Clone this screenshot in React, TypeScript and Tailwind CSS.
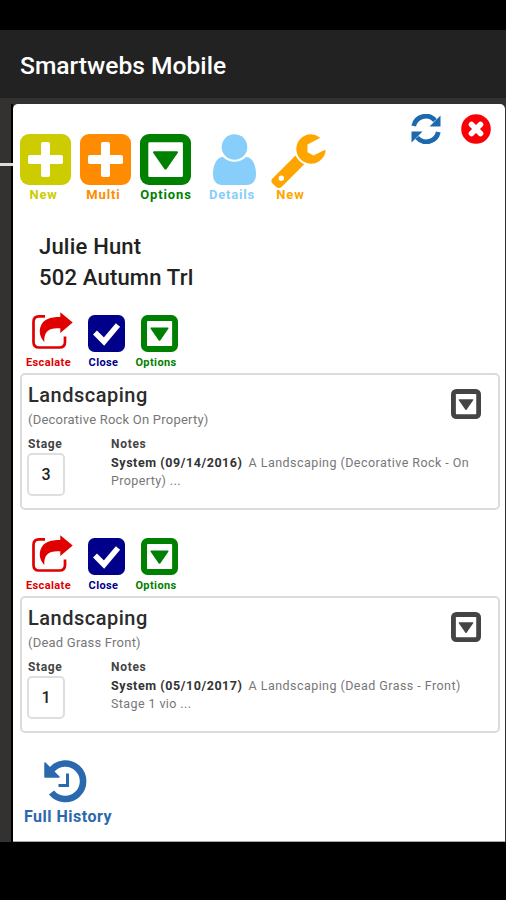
import type { ReactNode } from "react";

interface Violation {
  title: string;
  detail: string;
  stage: number;
  system: string;
  note: string;
  rest: string;
}

const violations: Violation[] = [
  {
    title: "Landscaping",
    detail: "(Decorative Rock On Property)",
    stage: 3,
    system: "System (09/14/2016)",
    note: "A Landscaping (Decorative Rock - On",
    rest: "Property) ...",
  },
  {
    title: "Landscaping",
    detail: "(Dead Grass Front)",
    stage: 1,
    system: "System (05/10/2017)",
    note: "A Landscaping (Dead Grass - Front)",
    rest: "Stage 1 vio ...",
  },
];

function PlusSquareIcon() {
  return (
    <svg viewBox="0 0 51 51" className="block h-[51px] w-[51px]" fill="currentColor">
      <rect width="51" height="51" rx="9" />
      <rect x="8" y="21" width="35" height="9" rx="1.8" fill="#fff" />
      <rect x="21" y="8" width="9" height="35" rx="1.8" fill="#fff" />
    </svg>
  );
}

function CaretSquareIcon({ className }: { className: string }) {
  return (
    <svg viewBox="0 0 51 51" className={className} fill="currentColor">
      <rect width="51" height="51" rx="9" />
      <rect x="8.3" y="8.3" width="34.6" height="34.6" rx="1.2" fill="#fff" />
      <path d="M14.2 17.3h22.6q2 0 .9 1.8L26.8 34.7q-1.3 1.7-2.6 0L13.3 19.1q-1.1-1.8.9-1.8z" />
    </svg>
  );
}

function UserIcon() {
  return (
    <svg viewBox="0 0 43 51" className="block h-[51px] w-[43px]" fill="currentColor">
      <path d="M10 23C3.5 23 0 31 0 40.5 0 47 4 51 9 51h25c5 0 9-4 9-10.5C43 31 39.5 23 33 23 30 26 26 27.8 21.5 27.8S13 26 10 23z" />
      <circle cx="21.5" cy="13" r="12.8" />
    </svg>
  );
}

function WrenchIcon() {
  return (
    <svg viewBox="0 0 55 54" className="block h-[54px] w-[55px]" fill="currentColor">
      <path
        fillRule="evenodd"
        d="M24.5 21.5 1.5 44.5Q-.8 47 1.5 49.5L5.3 53Q8 55 10.5 53L33.3 30.3Q27.5 27.5 24.5 21.5zM10.3 41.5a2.7 2.7 0 1 1 0 5.4 2.7 2.7 0 0 1 0-5.4z"
      />
      <path d="M48.5 3.2Q44.5.3 39.5.3A14.7 14.7 0 1 0 54.3 18.5Q55.2 15.3 53 16.3L42.5 21.5 36.5 18.2V10.5L48.5 4.2Q49.2 3.7 48.5 3.2z" />
    </svg>
  );
}

function RefreshIcon() {
  return (
    <svg viewBox="0 0 30 30" className="block h-[30px] w-[30px]">
      <path
        d="M2.7 12A12.3 12.3 0 0 1 24 6.5M27.3 18A12.3 12.3 0 0 1 6 23.5"
        fill="none"
        stroke="currentColor"
        strokeWidth="4.8"
      />
      <path d="M29.5 1.5V12.5H18.5zM.5 28.5V17.5H11.5z" fill="currentColor" />
    </svg>
  );
}

function CloseIcon() {
  return (
    <svg viewBox="0 0 30 30" className="block h-[30px] w-[30px]">
      <circle cx="15" cy="15" r="14.8" fill="#fb0007" />
      <path d="m10.5 10.5 9 9M19.5 10.5l-9 9" stroke="#fff" strokeWidth="5.6" strokeLinecap="round" />
    </svg>
  );
}

function ShareIcon() {
  return (
    <svg viewBox="0 0 41 38" className="block h-[38px] w-[41px]">
      <path
        d="M13 4.4H7Q1.5 4.4 1.5 10V30Q1.5 35.5 7 35.5H27.5Q33 35.5 33 30V24.5"
        fill="none"
        stroke="currentColor"
        strokeWidth="2.7"
      />
      <path
        d="M28.3.3 40.7 10.5 28.3 21V16.3C17 15.5 11.8 19 12.3 30 7.5 25 7 19 8.6 14.5 11.5 7 18 5 28.3 5z"
        fill="currentColor"
      />
    </svg>
  );
}

function CheckSquareIcon() {
  return (
    <svg viewBox="0 0 37 37" className="block h-[37px] w-[37px]">
      <rect width="37" height="37" rx="6.5" fill="currentColor" />
      <path d="m7 17.5 9 9L30 10" fill="none" stroke="#fff" strokeWidth="5.6" />
    </svg>
  );
}

function HistoryIcon() {
  return (
    <svg viewBox="0 0 43 43" className="block h-[43px] w-[43px]">
      <path d="M7.5 10A17.8 17.8 0 1 1 7.5 32.5" fill="none" stroke="currentColor" strokeWidth="6.6" />
      <path d="M1 3V17H15z" fill="currentColor" stroke="currentColor" strokeWidth="1.5" strokeLinejoin="round" />
      <path d="M23.5 13.5V25.5H14.5" fill="none" stroke="currentColor" strokeWidth="3" />
    </svg>
  );
}

function Toolbar() {
  return (
    <div className="flex h-[105px] pl-[7px] pt-[30px] text-[13px] font-bold leading-[20px]">
      <div className="w-[60px] text-[#cccc00]">
        <PlusSquareIcon />
        <p className="w-[47px] text-center tracking-[0.7px]">New</p>
      </div>
      <div className="w-[60px] text-[#ff8c00]">
        <PlusSquareIcon />
        <p className="w-[47px] text-center tracking-[0.9px]">Multi</p>
      </div>
      <div className="w-[73px] text-[#008000]">
        <CaretSquareIcon className="block h-[51px] w-[51px]" />
        <p className="w-[52px] whitespace-nowrap text-center tracking-[0.9px]">Options</p>
      </div>
      <div className="w-[58px] text-[#87cefa]">
        <UserIcon />
        <p className="-ml-1 w-[46px] whitespace-nowrap text-center tracking-[0.8px]">Details</p>
      </div>
      <div className="w-[60px] text-[#ffa500]">
        <div className="h-[51px]">
          <WrenchIcon />
        </div>
        <p className="w-[39px] text-center tracking-[0.9px]">New</p>
      </div>
      <div className="-mt-5 ml-auto flex gap-[20.5px] pr-[14px] text-[#1c69ad]">
        <RefreshIcon />
        <CloseIcon />
      </div>
    </div>
  );
}

function Action({ label, className, children }: { label: string; className: string; children: ReactNode }) {
  return (
    <div className={className}>
      <div className="flex h-[41px] items-end justify-center">{children}</div>
      <p className="mt-[2px] whitespace-nowrap text-center">{label}</p>
    </div>
  );
}

function ViolationActions() {
  return (
    <div className="flex h-[62px] pl-[11px] text-[11px] font-bold leading-[17px] tracking-[0.4px]">
      <Action label="Escalate" className="w-[49px] text-[#e00000]">
        <div className="mb-[2px] ml-[7px]">
          <ShareIcon />
        </div>
      </Action>
      <Action label="Close" className="ml-[12px] w-[37px] text-[#00008b]">
        <div className="ml-[6px]">
          <CheckSquareIcon />
        </div>
      </Action>
      <Action label="Options" className="ml-[12px] w-[44px] text-[#008000]">
        <CaretSquareIcon className="ml-[6px] block h-[37px] w-[37px]" />
      </Action>
    </div>
  );
}

function ViolationCard({ violation }: { violation: Violation }) {
  return (
    <div className="ml-[7px] h-[137px] w-[480px] rounded-[5px] border-2 border-[#dcdcdc] px-[6px] pt-[8px] text-[#777]">
      <div className="flex h-[53px] justify-between">
        <div>
          <h3 className="text-[20px] font-medium leading-[25px] tracking-[0.5px] text-[#2c2c2c]">{violation.title}</h3>
          <p className="mt-[4px] text-[13px] leading-4 tracking-[0.22px]">{violation.detail}</p>
        </div>
        <CaretSquareIcon className="mr-[11px] mt-[6px] block h-[30px] w-[30px] text-[#444]" />
      </div>
      <div className="flex">
        <div className="w-[83px]">
          <p className="text-[12px] font-bold leading-[16px] tracking-[0.6px] text-[#444]">Stage</p>
          <div className="-ml-px mt-[1px] flex h-[43px] w-[38px] items-center justify-center rounded-[5px] border-2 border-[#dedede] text-[16px] font-medium text-[#222]">
            {violation.stage}
          </div>
        </div>
        <div className="whitespace-nowrap text-[12.5px] leading-[19px] tracking-[0.45px]">
          <p className="text-[12px] font-bold leading-[16px] tracking-[0.7px] text-[#444]">Notes</p>
          <p className="mt-[1px]">
            <span className="mr-[6px] font-bold tracking-[0.57px] text-[#333]">{violation.system}</span>
            {violation.note}
          </p>
          <p className="-mt-px tracking-[0.4px]">{violation.rest}</p>
        </div>
      </div>
    </div>
  );
}

export default function App() {
  return (
    <div className="flex h-[900px] w-[506px] flex-col overflow-hidden bg-black py-[30px] font-['Roboto',sans-serif]">
      <header className="flex h-[68px] shrink-0 items-center bg-[#222] pl-5">
        <h1 className="pt-[4px] text-[24.6px] font-medium text-white">Smartwebs Mobile</h1>
      </header>
      <div className="flex h-[744px] shrink-0 bg-[#333230] pt-[6px]">
        <div className="w-[13px] shrink-0 border-r-2 border-black">
          <div className="mt-[59px] h-[3px] w-[13px] bg-[#ddd]" />
        </div>
        <main className="h-[738px] w-[492px] rounded-t-[5px] border-b border-[#aaa] bg-white">
          <Toolbar />
          <div className="h-[102px] pl-[26px] pt-[22px] text-[22px] font-medium leading-[31px] tracking-[0.2px] text-[#222]">
            <p>Julie Hunt</p>
            <p>502 Autumn Trl</p>
          </div>
          {violations.map((violation) => (
            <section key={violation.system} className="mb-[24px]">
              <ViolationActions />
              <ViolationCard violation={violation} />
            </section>
          ))}
          <div className="w-[110px] pl-[11px] pt-[3px] text-[#2a69ad]">
            <div className="pl-[20px]">
              <HistoryIcon />
            </div>
            <p className="mt-[2px] whitespace-nowrap text-[16px] font-bold tracking-[0.5px]">Full History</p>
          </div>
        </main>
      </div>
    </div>
  );
}
